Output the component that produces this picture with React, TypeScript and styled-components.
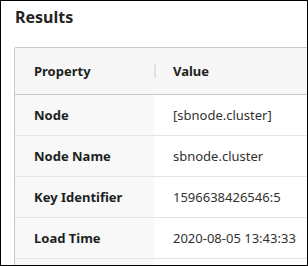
import React from "react";
import styled, { createGlobalStyle } from "styled-components";

const GlobalStyle = createGlobalStyle`
  html, body {
    margin: 0;
    padding: 0;
    background: #ffffff;
  }
  * {
    box-sizing: border-box;
  }
`;

const rows = [
  { property: "Node", value: "[sbnode.cluster]" },
  { property: "Node Name", value: "sbnode.cluster" },
  { property: "Key Identifier", value: "1596638426546:5" },
  { property: "Load Time", value: "2020-08-05 13:43:33" },
  { property: "", value: "" },
];

const App = () => {
  return (
    <>
      <GlobalStyle />
      <Frame>
        <Title>Results</Title>
        <Card>
          <HeaderRow>
            <HeaderCell>Property</HeaderCell>
            <HeaderCell divider>Value</HeaderCell>
          </HeaderRow>
          {rows.map((row, i) => (
            <Row key={i}>
              <KeyCell>{row.property}</KeyCell>
              <ValueCell>{row.value}</ValueCell>
            </Row>
          ))}
        </Card>
      </Frame>
    </>
  );
};

export default App;

const Frame = styled.div`
  width: 308px;
  height: 266px;
  border: 1px solid #000000;
  overflow: hidden;
  font-family: "Noto Sans", "Open Sans", sans-serif;
  color: #323130;
`;

const Title = styled.h2`
  margin: 0;
  padding: 4px 0 0 14px;
  height: 46px;
  font-size: 16px;
  font-weight: 700;
  line-height: 24px;
  color: #252423;
`;

const Card = styled.div`
  width: 420px;
  margin-left: 13px;
  border: 1px solid #c8c8d0;
  border-radius: 2px 0 0 0;
  display: flex;
  flex-direction: column;
`;

const HeaderRow = styled.div`
  display: grid;
  grid-template-columns: 139px 1fr;
  height: 47px;
  background: #f7f7f7;
  border-bottom: 1px solid #c8c8d0;
`;

const HeaderCell = styled.div<{ divider?: boolean }>`
  position: relative;
  display: flex;
  align-items: center;
  padding-left: 19px;
  font-size: 13px;
  font-weight: 700;
  color: #201f1e;

  &::before {
    content: "";
    display: ${(p) => (p.divider ? "block" : "none")};
    position: absolute;
    left: 0;
    top: 16px;
    width: 2px;
    height: 14px;
    background: #dfe2e8;
  }
`;

const Row = styled.div`
  display: grid;
  grid-template-columns: 139px 1fr;
  height: 41px;
  border-bottom: 1px solid #e1e4ea;
`;

const KeyCell = styled.div`
  display: flex;
  align-items: center;
  padding-left: 19px;
  background: #f8f8f8;
  font-size: 13px;
  font-weight: 700;
  color: #201f1e;
`;

const ValueCell = styled.div`
  display: flex;
  align-items: center;
  padding-left: 19px;
  font-size: 13px;
  font-weight: 400;
  color: #323130;
  white-space: nowrap;
`;
